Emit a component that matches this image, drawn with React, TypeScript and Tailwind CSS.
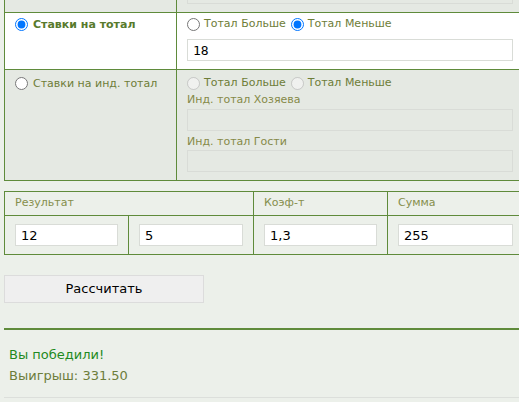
import React from "react";

const border = "border-[#5f8b3b]";

const Radio = ({ checked, disabled }: { checked?: boolean; disabled?: boolean }) => (
  <input
    type="radio"
    defaultChecked={checked}
    disabled={disabled}
    className="w-[13px] h-[13px] m-0 shrink-0"
  />
);

const Field = ({ value, disabled, mono }: { value?: string; disabled?: boolean; mono?: boolean }) => (
  <input
    type="text"
    defaultValue={value}
    disabled={disabled}
    className={`block w-full h-[22px] px-[5px] border border-[#d9dcd7] text-[13px] text-black outline-none ${
      disabled ? "bg-[#e5e9e3]" : "bg-white"
    } ${mono ? "font-['DejaVu_Sans_Mono']" : "font-['DejaVu_Sans']"}`}
  />
);

const App = () => {
  return (
    <div className="w-[519px] h-[402px] overflow-hidden bg-[#ecf0ea] font-['DejaVu_Sans',sans-serif]">
      <div className="ml-[4px] w-[520px]">
        {/* bet type table */}
        <div className={`border-l border-r border-b ${border}`}>
          <div className={`grid grid-cols-[172px_1fr] h-[13px] bg-[#e5e9e3] border-b ${border}`}>
            <div className={`border-r ${border}`} />
            <div className="px-[10px]">
              <div className="h-[4px] border-x border-b border-[#d9dcd7]" />
            </div>
          </div>

          <div className={`grid grid-cols-[172px_1fr] bg-white border-b ${border}`}>
            <div className={`border-r ${border} pl-[10px] pt-[5px] flex items-start gap-[5px]`}>
              <span className="h-[13px] flex items-center"><Radio checked /></span>
              <span className="text-[11px] leading-[13px] font-bold text-[#587a2c]">Ставки на тотал</span>
            </div>
            <div className="px-[10px] pt-[5px] pb-[8px]">
              <div className="flex items-center h-[13px] text-[11px] text-[#6e7d38]">
                <Radio />
                <span className="ml-[4px] mr-[5px]">Тотал Больше</span>
                <Radio checked />
                <span className="ml-[4px]">Тотал Меньше</span>
              </div>
              <div className="mt-[8px]">
                <Field value="18" mono />
              </div>
            </div>
          </div>

          <div className="grid grid-cols-[172px_1fr] bg-[#e5e9e3]">
            <div className={`border-r ${border} pl-[10px] pt-[7px] flex items-start gap-[5px]`}>
              <span className="h-[13px] flex items-center"><Radio /></span>
              <span className="text-[11px] leading-[13px] text-[#6e7d38]">Ставки на инд. тотал</span>
            </div>
            <div className="px-[10px] pt-[7px] pb-[8px] text-[11px] text-[#6e7d38]">
              <div className="flex items-center h-[13px]">
                <Radio disabled />
                <span className="ml-[4px] mr-[5px]">Тотал Больше</span>
                <Radio disabled />
                <span className="ml-[4px]">Тотал Меньше</span>
              </div>
              <div className="mt-[3px] leading-[13px] text-[#868a48]">Инд. тотал Хозяева</div>
              <div className="mt-[3px]"><Field disabled /></div>
              <div className="mt-[4px] leading-[13px] text-[#868a48]">Инд. тотал Гости</div>
              <div className="mt-[2px]"><Field disabled /></div>
            </div>
          </div>
        </div>

        {/* result table */}
        <div className={`mt-[10px] border ${border}`}>
          <div className={`grid grid-cols-[249px_134px_1fr] h-[24px] border-b ${border} text-[11px] text-[#858e4c]`}>
            <div className={`border-r ${border} pl-[10px] flex items-center`}>Результат</div>
            <div className={`border-r ${border} pl-[10px] flex items-center`}>Коэф-т</div>
            <div className="pl-[10px] flex items-center">Сумма</div>
          </div>
          <div className="grid grid-cols-[124px_125px_134px_1fr] h-[38px]">
            <div className={`border-r ${border} px-[10px] pt-[8px]`}><Field value="12" /></div>
            <div className={`border-r ${border} px-[10px] pt-[8px]`}><Field value="5" /></div>
            <div className={`border-r ${border} px-[10px] pt-[8px]`}><Field value="1,3" /></div>
            <div className="px-[10px] pt-[8px]"><Field value="255" /></div>
          </div>
        </div>

        <button
          type="button"
          className="block mt-[20px] w-[200px] h-[28px] bg-[#efefef] border border-[#dcdcdc] text-[13px] text-black font-['DejaVu_Sans']"
        >
          Рассчитать
        </button>

        <div className={`mt-[25px] border-t-2 ${border}`} />

        <div className="pl-[5px] pt-[14px] text-[13px] leading-[21px]">
          <div className="text-[#1f8a22]">Вы победили!</div>
          <div className="text-[#6d7d3a]">Выигрыш: 331.50</div>
        </div>

        <div className="mt-[11px] border-t border-[#dcdfdb]" />
      </div>
    </div>
  );
};

export default App;
